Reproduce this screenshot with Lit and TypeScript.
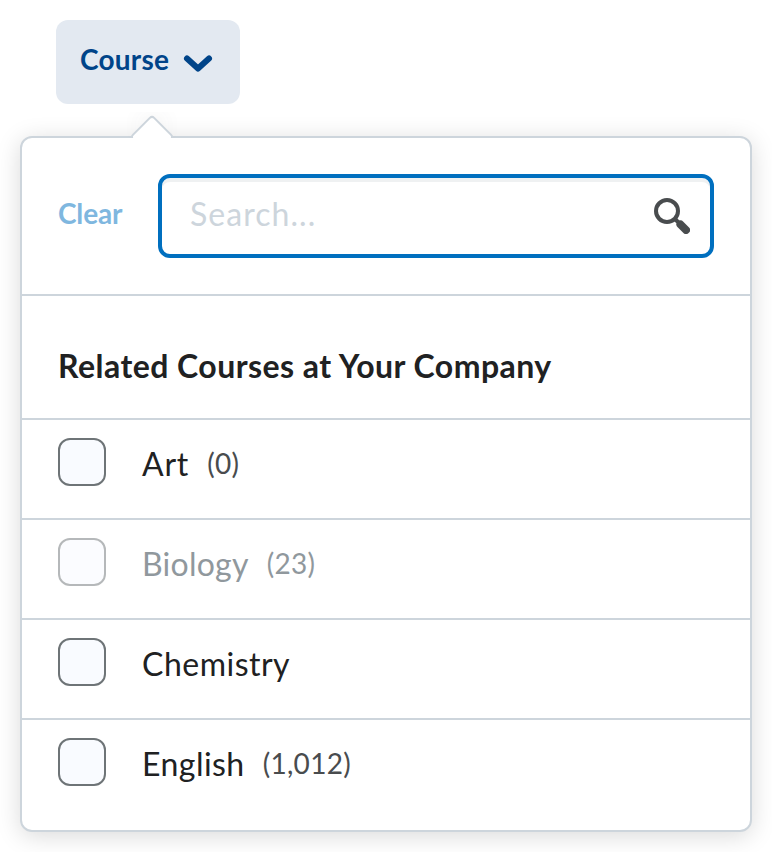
import { LitElement, html, css, nothing } from "lit";
import { customElement, state } from "lit/decorators.js";
import { classMap } from "lit/directives/class-map.js";
import { styleMap } from "lit/directives/style-map.js";

interface Course {
  name: string;
  tracking: number;
  count?: string;
  disabled?: boolean;
}

@customElement("app-root")
export class AppRoot extends LitElement {
  @state() private courses: Course[] = [
    { name: "Art", tracking: 0.8, count: "(0)" },
    { name: "Biology", tracking: 0.25, count: "(23)", disabled: true },
    { name: "Chemistry", tracking: 0.5 },
    { name: "English", tracking: 0.45, count: "(1,012)" },
  ];

  static styles = css`
    :host {
      display: block;
      box-sizing: border-box;
      height: 852px;
      padding: 20px 20px 0;
      overflow: hidden;
      background: #fff;
      color: #202122;
      font-family: Lato, sans-serif;
      font-size: 32px;
      letter-spacing: 0.4px;
    }
    * {
      box-sizing: border-box;
    }
    .opener {
      display: flex;
      align-items: center;
      width: 184px;
      height: 84px;
      margin: 0 0 32px 36px;
      padding: 0 24px 6px;
      border: 0;
      border-radius: 12px;
      background: #e3e9f1;
      color: #004489;
      font: 700 28px/40px Lato, sans-serif;
      letter-spacing: 0.25px;
    }
    .chevron {
      width: 36px;
      height: 36px;
      margin: 8px 0 0 11px;
      flex: none;
    }
    .panel {
      position: relative;
      width: 732px;
      height: 696px;
      border: 2px solid #cdd5dc;
      border-radius: 12px;
      background: #fff;
      box-shadow: 0 4px 24px rgba(0, 0, 0, 0.15);
    }
    .pointer {
      position: absolute;
      top: -26px;
      left: 102px;
      width: 56px;
      height: 26px;
      overflow: hidden;
    }
    .pointer-tip {
      width: 32px;
      height: 32px;
      margin: 9.4px 0 0 12px;
      border: 2px solid #cdd5dc;
      border-radius: 4px;
      background: #fff;
      box-shadow: -8px -8px 24px -10px rgba(73, 76, 78, 0.2);
      transform: rotate(45deg);
    }
    .header {
      display: flex;
      align-items: center;
      height: 158px;
      padding: 0 36px;
      border-bottom: 2px solid #cdd5dc;
    }
    .clear {
      width: 100px;
      padding-bottom: 6px;
      color: #7fb7df;
      font-size: 28px;
      font-weight: 700;
      letter-spacing: -0.15px;
    }
    .search {
      display: flex;
      align-items: center;
      justify-content: space-between;
      flex: 1;
      height: 84px;
      padding: 0 20px 0 28px;
      border: 4px solid #006fbf;
      border-radius: 12px;
      box-shadow: inset 0 4px 0 rgba(177, 185, 190, 0.2);
      color: #cdd5dc;
    }
    .placeholder {
      padding-bottom: 6px;
      letter-spacing: 1.05px;
    }
    .magnifier {
      width: 36px;
      height: 36px;
      flex: none;
    }
    .title {
      display: flex;
      align-items: center;
      height: 122px;
      margin: 0;
      padding: 16px 36px 0;
      font-size: 32px;
      font-weight: 700;
      letter-spacing: 0.46px;
    }
    .list {
      margin: 0;
      padding: 0;
      list-style: none;
    }
    .row {
      display: flex;
      align-items: flex-start;
      height: 100px;
      padding: 18px 36px 0;
      border-top: 2px solid #cdd5dc;
    }
    .box {
      width: 48px;
      height: 48px;
      margin-right: 36px;
      border: 2px solid #6e7477;
      border-radius: 12px;
      background: #f9fbff;
    }
    .label {
      display: flex;
      gap: 18px;
      line-height: 48px;
      padding-top: 2px;
    }
    .count {
      color: #494c4e;
      font-size: 28px;
      line-height: 46px;
      letter-spacing: 0.3px;
    }
    .disabled .box {
      opacity: 0.5;
    }
    .disabled .label,
    .disabled .count {
      color: #90989d;
    }
  `;

  render() {
    return html`
      <button class="opener">
        Course
        <svg class="chevron" viewBox="0 0 36 36" fill="none">
          <path d="M7 13.5 18 23.5 29 13.5" stroke="#004489" stroke-width="6" stroke-linecap="round" stroke-linejoin="round" />
        </svg>
      </button>
      <section class="panel">
        <div class="pointer"><div class="pointer-tip"></div></div>
        <div class="header">
          <span class="clear">Clear</span>
          <div class="search">
            <span class="placeholder">Search...</span>
            <svg class="magnifier" viewBox="0 0 36 36" fill="none" stroke="#494c4e">
              <circle cx="13" cy="13" r="11" stroke-width="4" />
              <path d="M20.5 20.5 25 25" stroke-width="4" />
              <path d="M26.5 26.5 32 32" stroke-width="8" stroke-linecap="round" />
            </svg>
          </div>
        </div>
        <h4 class="title">Related Courses at Your Company</h4>
        <ul class="list">
          ${this.courses.map(
            (c) => html`<li class=${classMap({ row: true, disabled: !!c.disabled })}>
              <span class="box"></span>
              <span class="label"
                ><span style=${styleMap({ letterSpacing: `${c.tracking}px` })}>${c.name}</span
                >${c.count ? html`<span class="count">${c.count}</span>` : nothing}</span
              >
            </li>`
          )}
        </ul>
      </section>
    `;
  }
}
